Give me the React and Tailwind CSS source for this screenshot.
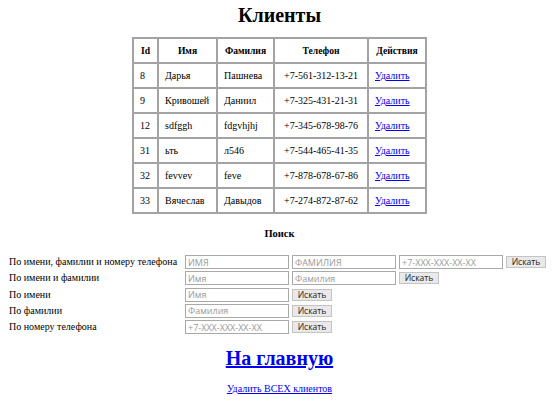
import React from "react";

const rows = [
  ["8", "Дарья", "Пашнева", "+7-561-312-13-21"],
  ["9", "Кривошей", "Даниил", "+7-325-431-21-31"],
  ["12", "sdfggh", "fdgvhjhj", "+7-345-678-98-76"],
  ["31", "ьть", "л546", "+7-544-465-41-35"],
  ["32", "fevvev", "feve", "+7-878-678-67-86"],
  ["33", "Вячеслав", "Давыдов", "+7-274-872-87-62"],
];

const cell = "border-2 border-[#a3a3a3] pt-[6px] pb-[5px] px-[6px] leading-[12px] text-left whitespace-nowrap";
const head = "border-2 border-[#a3a3a3] pt-[6px] pb-[5px] px-0 leading-[12px] text-center font-bold text-[9.6px] whitespace-nowrap";

function Input({ ph, w = "w-[104px]" }) {
  return (
    <input
      placeholder={ph}
      className={`${w} h-[14px] border border-[#a9a9a9] bg-white px-[2px] text-[9px] leading-[12px] text-[#333] placeholder:text-[#9a9a9a] outline-none`}
      style={{ fontFamily: '"Open Sans", "DejaVu Sans", sans-serif' }}
    />
  );
}

function Btn() {
  return (
    <button
      className="w-[40px] h-[12px] border border-[#c4c4c4] bg-[#e9e9e9] text-[8.5px] leading-[10px] text-[#222] flex items-center justify-center"
      style={{ fontFamily: '"Open Sans", "DejaVu Sans", sans-serif' }}
    >
      Искать
    </button>
  );
}

export default function App() {
  return (
    <div
      className="w-[559px] h-[405px] bg-white text-black text-[10px] overflow-hidden"
      style={{ fontFamily: '"Liberation Serif", "Times New Roman", serif' }}
    >
      <h1 className="text-center font-bold text-[20px] leading-[23px] pt-[4px]">Клиенты</h1>
      <div className="flex justify-center mt-[10px]">
        <table className="border-collapse border-2 border-[#a3a3a3] table-fixed w-[293px]">
          <colgroup>
            <col className="w-[25px]" />
            <col className="w-[59px]" />
            <col className="w-[57px]" />
            <col className="w-[94px]" />
            <col className="w-[58px]" />
          </colgroup>
          <thead>
            <tr>
              <th className={head}>Id</th>
              <th className={head}>Имя</th>
              <th className={head}>Фамилия</th>
              <th className={head}>Телефон</th>
              <th className={head}>Действия</th>
            </tr>
          </thead>
          <tbody>
            {rows.map((r) => (
              <tr key={r[0]}>
                <td className={cell}>{r[0]}</td>
                <td className={cell}>{r[1]}</td>
                <td className={cell}>{r[2]}</td>
                <td className={`${cell} !text-center`}>{r[3]}</td>
                <td className={cell}>
                  <a href="#" className="text-[#0000ee] underline">Удалить</a>
                </td>
              </tr>
            ))}
          </tbody>
        </table>
      </div>
      <h3 className="text-center font-bold text-[10.5px] leading-[12px] mt-[14px]">Поиск</h3>
      <div className="grid grid-cols-[176px_auto] gap-y-[2.25px] pl-[9px] mt-[15px] items-center">
        <span className="leading-[14px]">По имени, фамилии и номеру телефона</span>
        <div className="flex items-center gap-[3px]">
          <Input ph="ИМЯ" />
          <Input ph="ФАМИЛИЯ" />
          <Input ph="+7-XXX-XXX-XX-XX" />
          <Btn />
        </div>
        <span className="leading-[14px]">По имени и фамилии</span>
        <div className="flex items-center gap-[3px]">
          <Input ph="Имя" />
          <Input ph="Фамилия" />
          <Btn />
        </div>
        <span className="leading-[14px]">По имени</span>
        <div className="flex items-center gap-[3px]">
          <Input ph="Имя" />
          <Btn />
        </div>
        <span className="leading-[14px]">По фамилии</span>
        <div className="flex items-center gap-[3px]">
          <Input ph="Фамилия" />
          <Btn />
        </div>
        <span className="leading-[14px]">По номеру телефона</span>
        <div className="flex items-center gap-[3px]">
          <Input ph="+7-XXX-XXX-XX-XX" />
          <Btn />
        </div>
      </div>
      <div className="text-center mt-[13px]">
        <a href="#" className="text-[#0000ee] underline font-bold text-[20px] leading-[23px]">На главную</a>
      </div>
      <div className="text-center mt-[13px] leading-[12px]">
        <a href="#" className="text-[#0000ee] underline">Удалить ВСЕХ клиентов</a>
      </div>
    </div>
  );
}
